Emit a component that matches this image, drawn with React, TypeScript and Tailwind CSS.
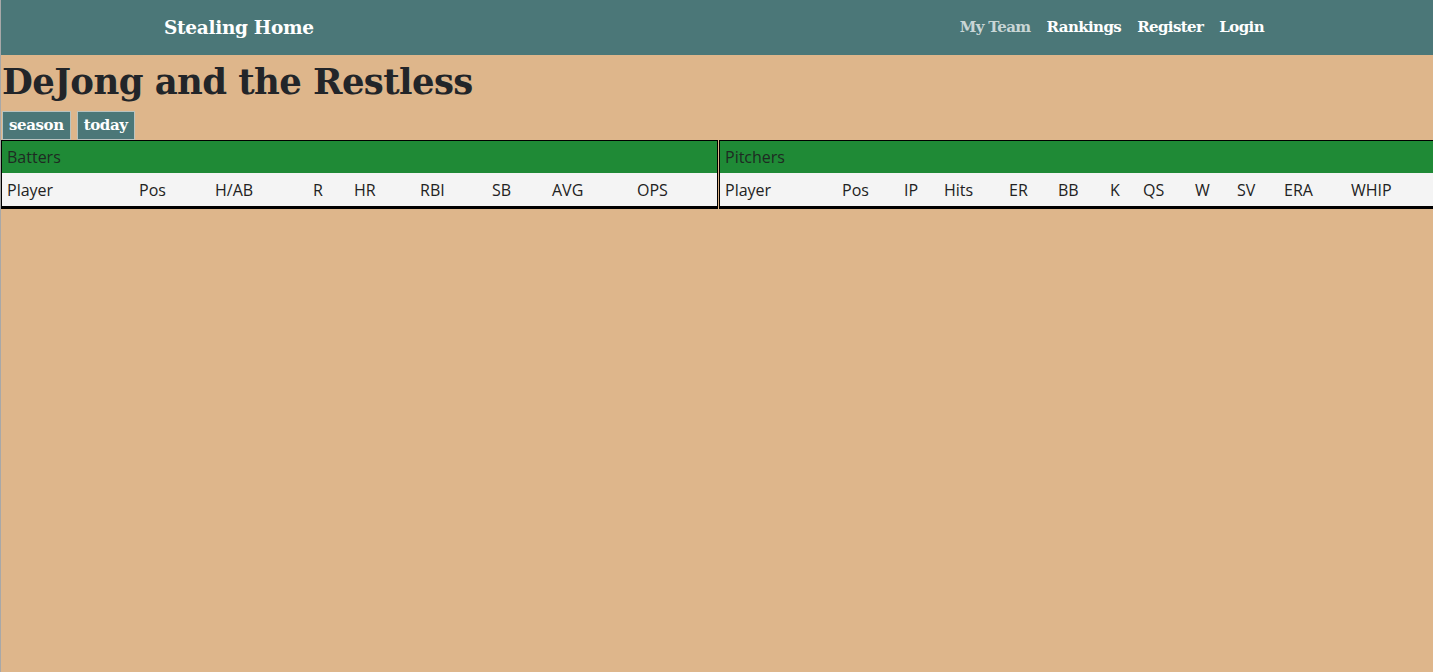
const batterCols = [
  { label: "Player", w: "w-[132px]" },
  { label: "Pos", w: "w-[76px]" },
  { label: "H/AB", w: "w-[98px]" },
  { label: "R", w: "w-[41px]" },
  { label: "HR", w: "w-[66px]" },
  { label: "RBI", w: "w-[72px]" },
  { label: "SB", w: "w-[60px]" },
  { label: "AVG", w: "w-[85px]" },
  { label: "OPS", w: "flex-1" },
]

const pitcherCols = [
  { label: "Player", w: "w-[117px]" },
  { label: "Pos", w: "w-[62px]" },
  { label: "IP", w: "w-[40px]" },
  { label: "Hits", w: "w-[65px]" },
  { label: "ER", w: "w-[49px]" },
  { label: "BB", w: "w-[52px]" },
  { label: "K", w: "w-[33px]" },
  { label: "QS", w: "w-[52px]" },
  { label: "W", w: "w-[42px]" },
  { label: "SV", w: "w-[47px]" },
  { label: "ERA", w: "w-[67px]" },
  { label: "WHIP", w: "flex-1" },
]

function StatTable({ title, cols, className }: { title: string; cols: { label: string; w: string }[]; className: string }) {
  return (
    <div className={"border-x border-t border-black border-b-[3px] " + className}>
      <div className="h-[32px] bg-[#1f8a36] px-[5px] flex items-center text-[16px] text-[#1e2a22]">
        {title}
      </div>
      <div className="h-[33px] bg-[#f4f4f4] pl-[5px] flex items-center text-[16px] text-[#222]">
        {cols.map((c) => (
          <div key={c.label} className={c.w}>
            {c.label}
          </div>
        ))}
      </div>
    </div>
  )
}

export default function App() {
  const slab = { fontFamily: '"DejaVu Serif", serif' }
  return (
    <div className="min-h-[672px] bg-[#deb68b] border-l border-[#a8a8a8]" style={{ fontFamily: '"Open Sans", sans-serif' }}>
      <nav className="h-[55px] bg-[#4b7778]">
        <div className="mx-auto w-[1140px] px-[15px] h-full flex items-center justify-between" style={slab}>
          <span className="pl-[2px] text-white font-bold text-[18.5px] tracking-[-0.3px]">Stealing Home</span>
          <div className="flex items-center text-[15px] font-bold tracking-[-0.6px]">
            <span className="px-2 text-[#c9d6d6]">My Team</span>
            <span className="px-2 text-white">Rankings</span>
            <span className="px-2 text-white">Register</span>
            <span className="px-2 text-white">Login</span>
          </div>
        </div>
      </nav>

      <h1 className="pl-[1px] pt-[2px] text-[35.5px] leading-[50px] font-bold text-[#222529] tracking-[-0.6px]" style={slab}>
        DeJong and the Restless
      </h1>

      <div className="flex gap-[6px] pl-[1px] pt-[4px]" style={slab}>
        <span className="h-[29px] px-[6px] flex items-center bg-[#4b7778] border border-[#b9c3c0] text-white font-bold text-[15px] tracking-[-0.4px]">season</span>
        <span className="h-[29px] px-[6px] flex items-center bg-[#4b7778] border border-[#b9c3c0] text-white font-bold text-[15px] tracking-[-0.4px]">today</span>
      </div>

      <div className="flex gap-[1px]">
        <StatTable title="Batters" cols={batterCols} className="w-[717px]" />
        <StatTable title="Pitchers" cols={pitcherCols} className="flex-1 border-r-0" />
      </div>
    </div>
  )
}
